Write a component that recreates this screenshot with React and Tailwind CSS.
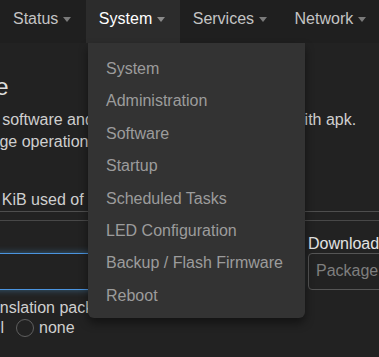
import React from "react";

const navItems = ["Status", "System", "Services", "Network"];
const menu = [
  "System",
  "Administration",
  "Software",
  "Startup",
  "Scheduled Tasks",
  "LED Configuration",
  "Backup / Flash Firmware",
  "Reboot",
];

const Caret = ({ active }) => (
  <span
    className={`ml-[5px] mt-[8px] self-start w-0 h-0 border-x-[4.5px] border-x-transparent border-t-[5px] ${
      active ? "border-t-[#8a8a8a]" : "border-t-[#7a7a7a]"
    }`}
  />
);

const Radio = ({ label }) => (
  <label className="flex items-center mr-[12px]">
    <span className="w-[18px] h-[18px] rounded-full border border-[#5f5f5f] mr-[5px]" />
    <span>{label}</span>
  </label>
);

export default function App() {
  return (
    <div className="relative w-[379px] h-[357px] overflow-hidden bg-[#222222] text-[16px] text-[#cfcfcf] font-['Liberation_Sans',Arial,sans-serif]">
      <nav className="flex h-[43px] bg-[#1f1f1f]">
        {navItems.map((item) => {
          const active = item === "System";
          return (
            <div
              key={item}
              className={`flex h-[43px] pt-[9px] leading-[20px] pl-[13px] pr-[14.5px] ${
                active ? "bg-[#2c2c2c] text-white" : "text-[#c4c4c4]"
              }`}
            >
              <span>{item}</span>
              <Caret active={active} />
            </div>
          );
        })}
      </nav>

      <main className="flex flex-col whitespace-nowrap">
        <h2 className="mt-[30px] ml-[-86px] text-[24px] leading-[28px] text-[#dedede]">
          Software
        </h2>
        <p className="mt-[8px] ml-[-117px] leading-[22px]">
          Install additional software and upgrade existing packages with apk.
        </p>
        <p className="ml-[-45px] leading-[22px]">
          Package operations may take a while.
        </p>
        <div className="mt-[36.5px] ml-[-169px] leading-[20px]">
          Free space: 48% (7664 KiB used of 14768 KiB)
        </div>
        <div className="mt-px h-px bg-[#4e4e4e]" />
        <div className="mt-[8px] h-px bg-[#484848]" />

        <div className="mt-[13px] flex gap-[8px]">
          <div className="ml-[-100px] w-[400px] shrink-0 flex flex-col">
            <label className="leading-[19px] h-[19px]">Filter:</label>
            <input
              className="h-[37px] rounded-[4px] border border-[#4b94df] bg-transparent px-[7px] outline-none shadow-[0_0_7px_rgba(82,168,236,0.45)]"
              defaultValue=""
            />
          </div>
          <div className="flex flex-col w-[220px] shrink-0">
            <label className="leading-[19px] h-[19px] text-[#e2e2e2]">
              Download and install package:
            </label>
            <input
              className="h-[37px] rounded-[4px] border border-[#555555] bg-transparent px-[7px] outline-none placeholder:text-[#7e7e7e]"
              placeholder="Package name or URL…"
            />
          </div>
        </div>

        <div className="mt-[8.5px] ml-[-114px] leading-[20px]">
          Display LuCI translation packages
        </div>
        <div className="ml-[-118px] flex items-center leading-[20px]">
          <Radio label="filtered" />
          <Radio label="all" />
          <Radio label="none" />
        </div>
      </main>

      <ul className="absolute left-[88px] top-[43px] w-[217px] pt-[10px] pb-[6px] bg-[#333333] rounded-b-[6px] shadow-[0_5px_10px_rgba(0,0,0,0.45)]">
        {menu.map((m) => (
          <li key={m} className="h-[32.4px] leading-[32.4px] pl-[18px] text-[#9c9c9c]">
            {m}
          </li>
        ))}
      </ul>
    </div>
  );
}
